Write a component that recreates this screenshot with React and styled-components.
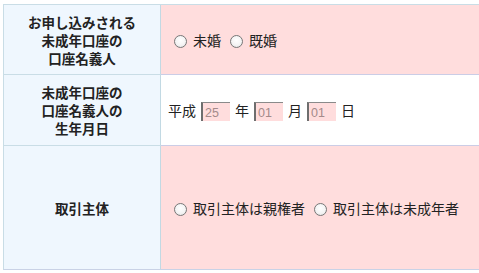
import React from "react";
import styled, { createGlobalStyle } from "styled-components";

const Global = createGlobalStyle`
  html, body { margin: 0; padding: 0; background: #fff; }
  body { font-family: "Noto Sans CJK JP", "Noto Sans", sans-serif; color: #222; }
`;

const Page = styled.div`
  padding: 4px 0 0 3px;
  width: 490px;
  overflow: hidden;
`;

const Table = styled.div`
  display: grid;
  grid-template-columns: 157px 330px;
  grid-template-rows: 70px 71px 123px;
  border-top: 1px solid #c9dde6;
  border-left: 1px solid #c9dde6;
  border-bottom: 1px solid #c9d2e6;
`;

const Head = styled.div`
  background: #eff7fe;
  border-right: 1px solid #c2d9e3;
  border-bottom: ${(p) => (p.$last ? "none" : "1px solid #c9dde6")};
  display: flex;
  flex-direction: column;
  align-items: center;
  justify-content: center;
  text-align: center;
  font-weight: bold;
  font-size: 13.5px;
  color: #222;
`;

const Line = styled.span`
  display: block;
  height: 18px;
  line-height: 18px;
  overflow: visible;
`;

const Cell = styled.div`
  background: ${(p) => (p.$pink ? "#ffdddd" : "#ffffff")};
  border-bottom: ${(p) => (p.$last ? "none" : "1px solid #cbcde6")};
  display: flex;
  align-items: center;
  padding-left: 7px;
  font-size: 14px;
  color: #222;
`;

const Option = styled.label`
  display: inline-flex;
  align-items: center;
  margin-right: 3px;
`;

const Radio = styled.span`
  display: inline-block;
  width: 13px;
  height: 13px;
  border-radius: 50%;
  border: 1px solid #777;
  background: radial-gradient(circle at 50% 40%, #ffffff 0%, #f4f4f4 55%, #dedede 100%);
  margin: 3px 6px 0 6px;
  box-sizing: border-box;
`;

const DateInput = styled.span`
  display: inline-block;
  width: 29px;
  height: 19px;
  box-sizing: border-box;
  background: #ffdddd;
  border-left: 2px solid #6e6e6e;
  border-top: 1px solid #8a8a8a;
  font-family: "Liberation Sans", Arial, sans-serif;
  font-size: 12.5px;
  line-height: 20px;
  color: #a48a8a;
  padding-left: 2px;
  margin: 2px 5px 0 5px;
`;

const Unit = styled.span``;

export default function App() {
  return (
    <>
      <Global />
      <Page>
        <Table>
          <Head>
            <Line>お申し込みされる</Line>
            <Line>未成年口座の</Line>
            <Line>口座名義人</Line>
          </Head>
          <Cell $pink>
            <Option>
              <Radio />
              未婚
            </Option>
            <Option>
              <Radio />
              既婚
            </Option>
          </Cell>
          <Head>
            <Line>未成年口座の</Line>
            <Line>口座名義人の</Line>
            <Line>生年月日</Line>
          </Head>
          <Cell>
            <Unit>平成</Unit>
            <DateInput>25</DateInput>
            <Unit>年</Unit>
            <DateInput>01</DateInput>
            <Unit>月</Unit>
            <DateInput>01</DateInput>
            <Unit>日</Unit>
          </Cell>
          <Head $last>
            <Line>取引主体</Line>
          </Head>
          <Cell $pink $last>
            <Option>
              <Radio />
              取引主体は親権者
            </Option>
            <Option>
              <Radio />
              取引主体は未成年者
            </Option>
          </Cell>
        </Table>
      </Page>
    </>
  );
}
